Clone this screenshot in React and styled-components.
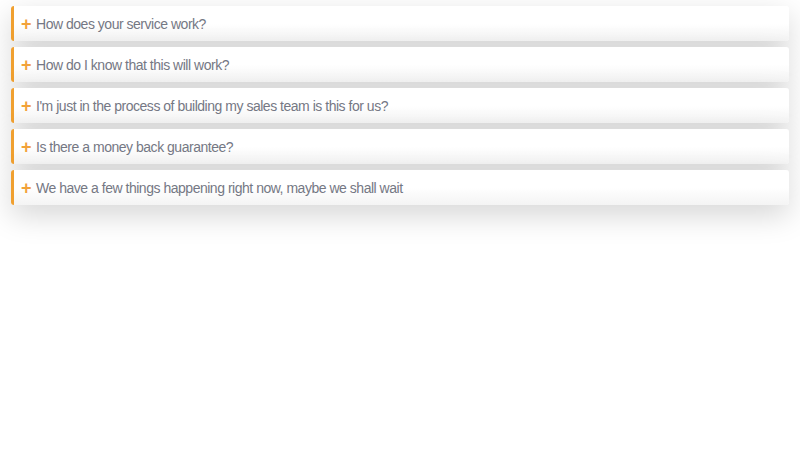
import React from "react";
import styled, { createGlobalStyle } from "styled-components";

const Global = createGlobalStyle`
  html, body { margin: 0; padding: 0; background: #fff; }
  body { font-family: "Liberation Sans", Arial, sans-serif; }
`;

const List = styled.div`
  display: flex;
  flex-direction: column;
  gap: 6px;
  padding: 6px 11px;
  min-height: 450px;
  box-sizing: border-box;
`;

const Item = styled.div`
  display: flex;
  align-items: center;
  gap: 6px;
  height: 35px;
  flex: none;
  box-sizing: border-box;
  padding-left: 7px;
  border-left: 3px solid #f0a030;
  border-radius: 3px;
  background: linear-gradient(#ffffff 50%, #f4f4f4);
  box-shadow: 0 10px 30px rgba(0, 0, 0, 0.17);
`;

const Plus = styled.span`
  color: #f2a23a;
  font-size: 18px;
  font-weight: 700;
  line-height: 1;
  width: 9px;
`;

const Question = styled.span`
  color: #757884;
  font-size: 14px;
  letter-spacing: -0.48px;
`;

const questions = [
  "How does your service work?",
  "How do I know that this will work?",
  "I'm just in the process of building my sales team is this for us?",
  "Is there a money back guarantee?",
  "We have a few things happening right now, maybe we shall wait",
];

export default function App() {
  return (
    <>
      <Global />
      <List>
        {questions.map((q) => (
          <Item key={q}>
            <Plus>+</Plus>
            <Question>{q}</Question>
          </Item>
        ))}
      </List>
    </>
  );
}
